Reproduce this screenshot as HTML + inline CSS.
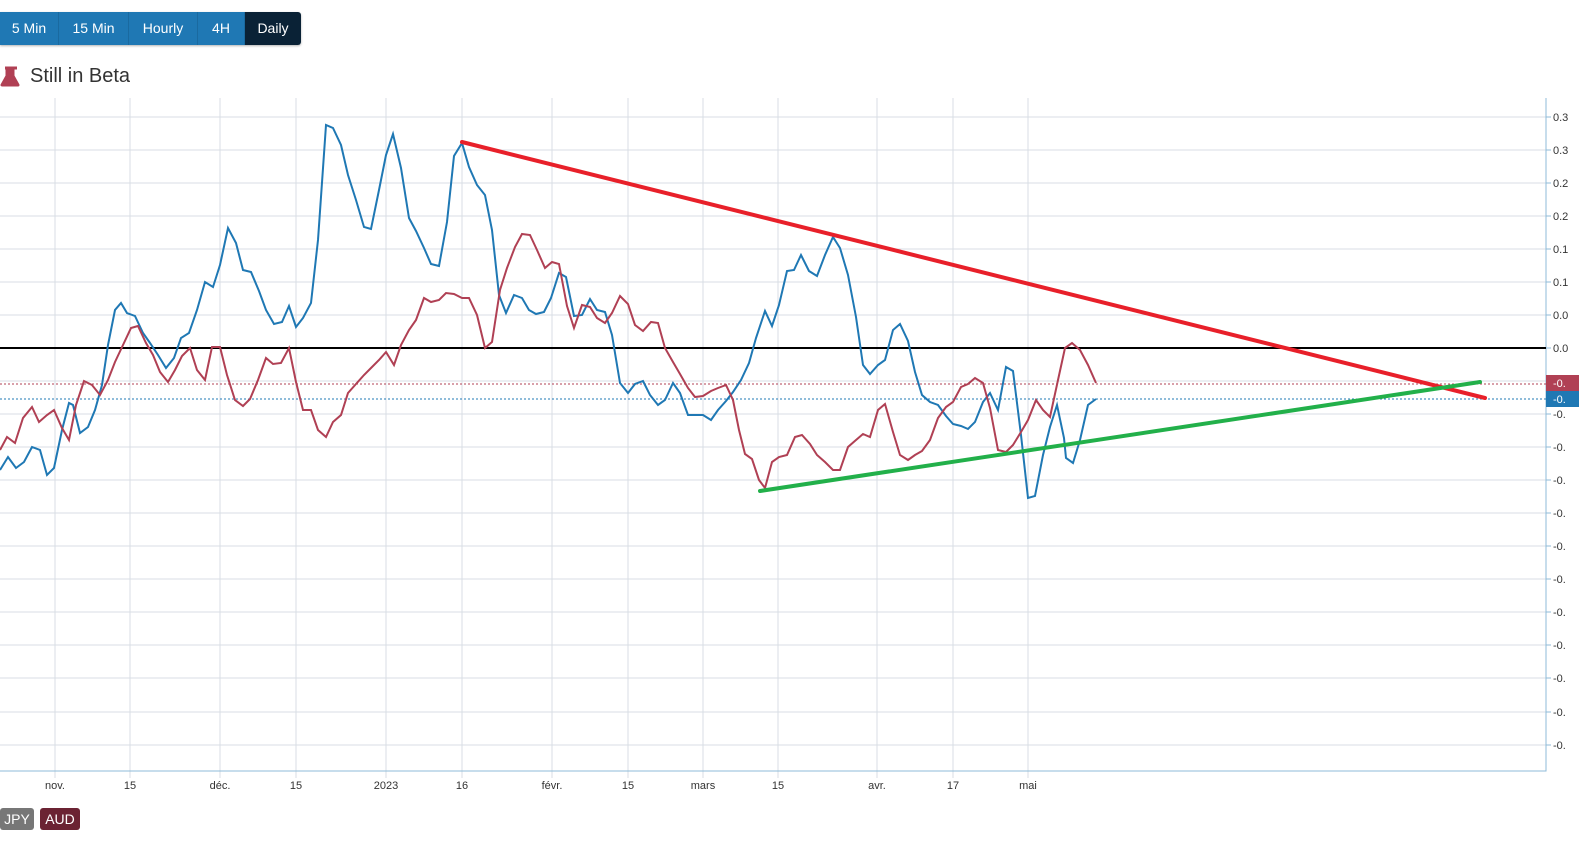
<!DOCTYPE html>
<html><head><meta charset="utf-8"><style>
body{margin:0;width:1579px;height:843px;background:#fff;font-family:"Liberation Sans",sans-serif;overflow:hidden;position:relative}
.btns{position:absolute;left:0;top:12px;height:33px;display:flex;box-shadow:0 1px 2px rgba(0,0,0,.3);border-radius:0 3px 3px 0;overflow:hidden}
.btns div{color:#fff;font-size:14px;line-height:33px;text-align:center;background:#1f78b4;border-right:1px solid #1a6aa0}
.btns .a{background:#0a2236;border:none}
.title{position:absolute;left:30px;top:65px;font-size:20px;color:#333}
.badge{position:absolute;top:808px;height:22px;line-height:22px;color:#fff;font-size:14px;text-align:center;border-radius:3px}
svg{position:absolute;left:0;top:0}
</style></head><body>
<div class="btns"><div style="width:58px">5 Min</div><div style="width:69px">15 Min</div><div style="width:68px">Hourly</div><div style="width:46px">4H</div><div class="a" style="width:56px">Daily</div></div>
<svg width="1579" height="843" viewBox="0 0 1579 843">
<path d="M5 68h12M7 68v8l-5 9h16l-5-9v-8" fill="#b04054" stroke="#b04054" stroke-width="3" stroke-linejoin="round"/>
<g stroke="#d8dee4" stroke-width="1">
<path d="M0 117H1546M0 150H1546M0 183H1546M0 216H1546M0 249H1546M0 282H1546M0 315H1546M0 381H1546M0 414H1546M0 447H1546M0 480H1546M0 513H1546M0 546H1546M0 579H1546M0 612H1546M0 645H1546M0 678H1546M0 712H1546M0 745H1546"/>
<path d="M55 98V778M130 98V778M220 98V778M296 98V778M386 98V778M462 98V778M552 98V778M628 98V778M703 98V778M778 98V778M877 98V778M953 98V778M1028 98V778"/>
</g>
<path d="M0 771H1546V98" stroke="#8fbbd8" fill="none"/>
<g stroke="#8fbbd8"><path d="M1546 117h5M1546 150h5M1546 183h5M1546 216h5M1546 249h5M1546 282h5M1546 315h5M1546 348h5M1546 414h5M1546 447h5M1546 480h5M1546 513h5M1546 546h5M1546 579h5M1546 612h5M1546 645h5M1546 678h5M1546 712h5M1546 745h5"/></g>
<path d="M0 348H1546" stroke="#000" stroke-width="2"/>
<path d="M0 384H1546" stroke="#b04054" stroke-dasharray="2,2"/>
<path d="M0 399H1546" stroke="#1f78b4" stroke-dasharray="2,2"/>
<polyline fill="none" stroke="#1f78b4" stroke-width="2" points="0,470 8,457 16,468 24,462 32,447 40,450 47,475 54,468 62,430 69,403 73,405 80,433 88,427 95,410 102,385 108,345 115,310 121,303 127,313 135,316 143,333 150,343 158,355 166,368 174,358 181,338 189,333 197,310 205,282 213,287 220,265 228,228 236,243 243,270 251,272 259,291 266,310 274,324 282,322 289,306 296,327 303,318 311,303 318,240 326,125 333,128 341,145 348,175 356,200 364,227 371,229 379,190 386,155 393,134 401,168 409,218 416,231 424,248 431,264 439,266 447,222 454,156 462,143 469,167 477,185 485,195 492,230 499,295 506,313 514,295 522,298 529,310 536,314 544,312 551,298 559,273 566,277 574,316 582,315 590,299 597,310 605,312 612,335 620,383 628,393 635,384 643,381 650,395 658,405 665,400 673,383 680,393 688,415 695,415 703,415 711,420 718,410 726,401 733,392 741,380 749,363 756,338 765,311 772,326 779,305 787,271 794,270 801,255 809,271 817,276 825,255 833,237 840,248 848,275 856,317 863,365 870,374 878,365 885,360 893,330 900,324 908,341 915,372 922,395 930,402 938,405 946,416 953,424 961,426 968,429 975,422 983,402 990,393 998,410 1006,367 1013,371 1021,435 1028,498 1035,496 1043,455 1050,427 1057,405 1064,438 1066,458 1073,463 1080,440 1088,405 1096,399"/>
<polyline fill="none" stroke="#b04054" stroke-width="2" points="0,450 7,437 15,443 23,418 32,407 39,422 47,415 54,410 62,428 69,440 76,405 84,381 92,385 100,395 108,380 115,362 123,345 131,328 138,326 146,343 153,355 160,372 168,382 175,370 182,356 190,348 197,370 205,380 212,347 220,347 227,375 235,400 243,406 250,399 258,380 266,358 273,364 281,363 289,348 296,382 303,410 311,410 318,430 326,437 333,422 341,415 348,393 356,384 364,375 371,368 379,360 386,352 394,365 401,345 409,330 416,320 424,298 431,302 439,300 446,293 454,294 462,298 469,298 477,315 485,348 492,342 500,290 507,268 515,247 522,234 530,235 537,250 545,268 552,262 559,264 567,306 574,328 582,305 590,307 597,318 605,323 612,313 620,296 628,304 635,325 643,331 651,322 658,323 665,348 673,362 680,374 688,388 695,397 703,396 711,391 718,388 726,385 733,400 739,430 745,454 752,459 759,480 765,488 772,462 779,457 787,455 795,437 802,435 810,444 817,455 825,462 833,470 840,470 848,447 856,440 863,434 870,437 878,410 885,404 893,432 900,455 908,460 915,455 922,451 930,440 938,418 946,407 953,402 961,387 968,384 975,378 983,383 990,408 998,450 1006,452 1013,445 1021,432 1028,420 1036,400 1043,410 1050,417 1058,380 1065,348 1072,343 1080,350 1088,365 1096,383"/>
<path d="M462 142L1485 398" stroke="#e8202a" stroke-width="4" stroke-linecap="round"/>
<path d="M760 491L1480 382" stroke="#22b04a" stroke-width="4" stroke-linecap="round"/>
<rect x="1546" y="375" width="33" height="16" fill="#b04054"/>
<rect x="1546" y="391" width="33" height="16" fill="#1f78b4"/>
<g font-family="Liberation Sans,sans-serif" font-size="11" fill="#333">
<text x="1553" y="121">0.3</text><text x="1553" y="154">0.3</text><text x="1553" y="187">0.2</text><text x="1553" y="220">0.2</text><text x="1553" y="253">0.1</text><text x="1553" y="286">0.1</text><text x="1553" y="319">0.0</text><text x="1553" y="352">0.0</text>
<text x="1553" y="387" fill="#fff">-0.</text><text x="1553" y="403" fill="#fff">-0.</text>
<text x="1553" y="418">-0.</text><text x="1553" y="451">-0.</text><text x="1553" y="484">-0.</text><text x="1553" y="517">-0.</text><text x="1553" y="550">-0.</text><text x="1553" y="583">-0.</text><text x="1553" y="616">-0.</text><text x="1553" y="649">-0.</text><text x="1553" y="682">-0.</text><text x="1553" y="716">-0.</text><text x="1553" y="749">-0.</text>
</g>
<g font-family="Liberation Sans,sans-serif" font-size="11" fill="#333" text-anchor="middle">
<text x="55" y="789">nov.</text><text x="130" y="789">15</text><text x="220" y="789">déc.</text><text x="296" y="789">15</text><text x="386" y="789">2023</text><text x="462" y="789">16</text><text x="552" y="789">févr.</text><text x="628" y="789">15</text><text x="703" y="789">mars</text><text x="778" y="789">15</text><text x="877" y="789">avr.</text><text x="953" y="789">17</text><text x="1028" y="789">mai</text>
</g>
</svg>
<div class="title">Still in Beta</div>
<div class="badge" style="left:0;width:34px;background:#777">JPY</div>
<div class="badge" style="left:40px;width:40px;background:#6b2333">AUD</div>
</body></html>
